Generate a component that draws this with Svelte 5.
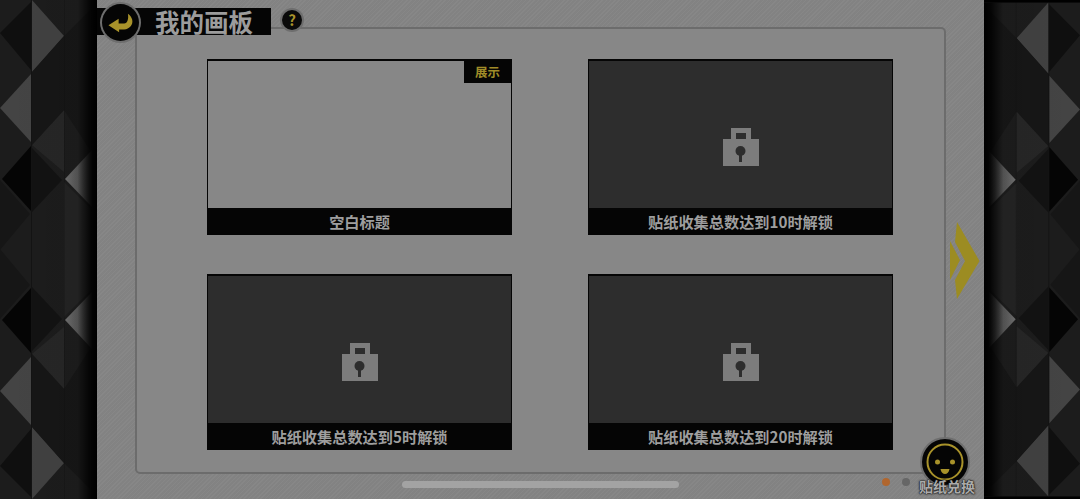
<script>
  const cards = [
    { title: "空白标题", open: true },
    { title: "贴纸收集总数达到10时解锁" },
    { title: "贴纸收集总数达到5时解锁" },
    { title: "贴纸收集总数达到20时解锁" },
  ]

  // top half of the side pattern, the bottom half is the same thing flipped
  const facets = [
    { points: "0,33 31,2 31,70", fill: "#0f0f0f" },
    { points: "32,0 64,36 32,72", fill: "#414141" },
    { points: "0,108 31,74 31,142", fill: "#444444" },
    { points: "32,145 64,110 64,172", fill: "#262626" },
    { points: "2,179 31,146 31,211", fill: "#050505" },
    { points: "32,148 62,180 32,212", fill: "#121212" },
    { points: "32,72 64,36 90,10 90,150 64,110 32,145", fill: "#161616" },
    { points: "65,179 92,150 92,207", fill: "url(#shine)" },
    { points: "64,182 90,208 90,250 64,250", fill: "#232323" },
    { points: "0,180 30,214 0,250", fill: "#161616" },
  ]
</script>

{#snippet side(cls)}
  <svg class="side {cls}" viewBox="0 0 97 499" width="97" height="499" aria-hidden="true">
    <defs>
      <linearGradient id="shine" gradientUnits="userSpaceOnUse" x1="65" y1="0" x2="92" y2="0">
        <stop offset="0" stop-color="#6e6e6e" />
        <stop offset="1" stop-color="#333" />
      </linearGradient>
      <linearGradient id="edge" x1="0" y1="0" x2="1" y2="0">
        <stop offset="0" stop-color="#000" stop-opacity="0" />
        <stop offset="0.8" stop-color="#000" stop-opacity="0.03" />
        <stop offset="0.94" stop-color="#000" stop-opacity="0.88" />
        <stop offset="1" stop-color="#000" />
      </linearGradient>
    </defs>
    <rect width="97" height="499" fill="#1c1c1c" />
    {#each facets as f}
      <polygon points={f.points} fill={f.fill} />
    {/each}
    <g transform="translate(0 499) scale(1 -1)">
      {#each facets as f}
        <polygon points={f.points} fill={f.fill} />
      {/each}
    </g>
    <rect x="31" width="1" height="499" fill="#000" opacity="0.3" />
    <rect x="64" width="1" height="499" fill="#000" opacity="0.12" />
    <rect width="97" height="499" fill="url(#edge)" />
  </svg>
{/snippet}

<div class="screen">
  {@render side("left")}

  <main class="center">
    <header class="head">
      <div class="title-bar">
        <span class="title">我的画板</span>
      </div>
      <button class="back" aria-label="返回">
        <svg viewBox="0 0 40 40" width="37" height="37">
          <path d="M7 23 L18 16 V21 H24 C27.5 21 29 16 28 10.5 C33 14 34.5 20 31 24 C29 26 27 27.5 24 27.5 H18.5 V30.5 Z" fill="#a8922a" />
        </svg>
      </button>
      <button class="help">?</button>
    </header>

    <section class="frame">
      <div class="grid">
        {#each cards as card}
          <article class="card" class:open={card.open}>
            <div class="art">
              {#if card.open}
                <span class="tag">展示</span>
              {:else}
                <svg class="lock" viewBox="0 0 36 38" width="36" height="38">
                  <path d="M8 11 V0 H28 V11 H23 V5 H13 V11 Z" fill="#7c7c7c" />
                  <rect y="11" width="36" height="27" fill="#7c7c7c" />
                  <circle cx="17.5" cy="23" r="5" fill="#2d2d2d" />
                  <rect x="16" y="24" width="3" height="10" fill="#2d2d2d" />
                </svg>
              {/if}
            </div>
            <div class="label">{card.title}</div>
          </article>
        {/each}
      </div>
    </section>

    <svg class="next" viewBox="0 0 30 78" width="30" height="78" aria-hidden="true">
      <path d="M7 0 L29.5 39 L7 77 L5 58 L15 39 L5 20 Z" fill="#9c8c22" />
      <path d="M0 19 L10 38 L0 58 Z" fill="#9c8c22" />
    </svg>

    <div class="pager">
      <span class="dot on"></span>
      <span class="dot"></span>
    </div>

    <div class="sticker">
      <svg viewBox="0 0 52 52" width="52" height="52">
        <circle cx="26" cy="26" r="24" fill="#050505" stroke="#6e6e6e" stroke-width="2" />
        <circle cx="26" cy="26" r="17.5" fill="none" stroke="#a8922a" stroke-width="2" />
        <circle cx="18.5" cy="26" r="2.5" fill="#a8922a" />
        <circle cx="33.5" cy="26" r="2.5" fill="#a8922a" />
        <path d="M21.5 33 H30.5 C30 36.5 28 38 26 38 C24 38 22 36.5 21.5 33 Z" fill="#a8922a" />
      </svg>
      <span class="sticker-label">贴纸兑换</span>
    </div>

    <div class="home-bar"></div>
  </main>

  {@render side("right")}
</div>

<style>
  :global(body) {
    background: #000;
  }

  .screen {
    display: flex;
    width: 1080px;
    height: 499px;
    overflow: hidden;
    font-family: "Noto Sans CJK SC", "Noto Sans", sans-serif;
  }

  .side {
    flex: none;
    display: block;
  }

  .side.right {
    width: 96px;
    transform: scaleX(-1);
  }

  .center {
    position: relative;
    flex: 1;
    min-width: 0;
    padding-top: 8px;
    background-color: #858585;
    background-image: repeating-linear-gradient(
      135deg,
      rgba(255, 255, 255, 0.018) 0 1px,
      rgba(0, 0, 0, 0.018) 1px 3px
    );
  }

  .head {
    position: relative;
    height: 27px;
    z-index: 1;
  }

  .title-bar {
    width: 174px;
    height: 27px;
    background: #050505;
    display: flex;
    align-items: center;
    padding-left: 58px;
    box-sizing: border-box;
  }

  .title {
    color: #9c9c9c;
    font-size: 24.5px;
    font-weight: 700;
    line-height: 27px;
  }

  button {
    padding: 0;
    border: 0;
    font-family: inherit;
  }

  .back {
    position: absolute;
    left: 5px;
    top: -4px;
    width: 37px;
    height: 37px;
    border-radius: 50%;
    background: #050505;
    box-shadow: 0 0 0 2px #6e6e6e;
  }

  .back svg {
    display: block;
  }

  .help {
    position: absolute;
    left: 185px;
    top: 2px;
    width: 20px;
    height: 20px;
    border-radius: 50%;
    background: #0a0a0a;
    box-shadow: 0 0 0 2px #6e6e6e;
    color: #a8922a;
    font-size: 15px;
    font-weight: 700;
    line-height: 20px;
  }

  .frame {
    width: 811px;
    height: 447px;
    margin: -8px 0 0 38px;
    box-sizing: border-box;
    border: 2px solid #6c6c6c;
    border-radius: 5px;
    padding: 30px 0 0 70px;
    background: #878787;
  }

  .grid {
    display: grid;
    grid-template-columns: 305px 305px;
    grid-auto-rows: 176px;
    column-gap: 76px;
    row-gap: 39px;
  }

  .card {
    display: flex;
    flex-direction: column;
    background: #050505;
  }

  .art {
    position: relative;
    flex: 1;
    margin: 2px 1px 0;
    display: flex;
    align-items: center;
    justify-content: center;
    background: #2d2d2d;
  }

  .card.open .art {
    background: #878787;
  }

  .lock {
    margin-top: 25px;
  }

  .tag {
    position: absolute;
    top: -1px;
    right: 0;
    width: 47px;
    height: 23px;
    background: #050505;
    color: #a08c28;
    font-size: 12.5px;
    font-weight: 700;
    line-height: 23px;
    text-align: center;
  }

  .label {
    height: 27px;
    color: #9e9e9e;
    font-size: 15.2px;
    font-weight: 700;
    line-height: 27px;
    text-align: center;
  }

  .next {
    position: absolute;
    left: 853px;
    top: 222px;
  }

  .pager {
    position: absolute;
    left: 785px;
    top: 478px;
    display: flex;
    gap: 12px;
  }

  .dot {
    width: 8px;
    height: 8px;
    border-radius: 50%;
    background: #666;
  }

  .dot.on {
    background: #b0662e;
  }

  .sticker {
    position: absolute;
    left: 822px;
    top: 436px;
    width: 52px;
    height: 52px;
  }

  .sticker svg {
    display: block;
  }

  .sticker-label {
    position: absolute;
    left: -4px;
    top: 40px;
    width: 64px;
    color: #ababab;
    font-size: 14px;
    font-weight: 700;
    line-height: 20px;
    text-align: center;
    white-space: nowrap;
    text-shadow: 0 0 2px #1a1a1a, 0 0 2px #1a1a1a, 0 0 1px #1a1a1a;
  }

  .home-bar {
    position: absolute;
    left: 305px;
    top: 481px;
    width: 277px;
    height: 7px;
    border-radius: 4px;
    background: #a3a3a3;
  }
</style>
